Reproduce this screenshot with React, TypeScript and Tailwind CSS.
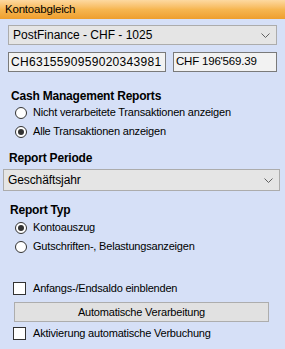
const Chevron = () => (
    <svg width="9" height="5" viewBox="0 0 9 5" className="shrink-0">
        <path d="M0.5 0.5 L4.5 4.5 L8.5 0.5" fill="none" stroke="#606060" strokeWidth="1" />
    </svg>
)

const Radio = ({ checked, label }: { checked?: boolean; label: string }) => (
    <div className="h-[19px] flex items-center pl-[7px] gap-[6px]">
        <div className="w-[12px] h-[12px] rounded-full bg-white border border-[#333] flex items-center justify-center">
            {checked && <div className="w-[6px] h-[6px] rounded-full bg-[#333]" />}
        </div>
        <span className="text-[11px] tracking-[-0.2px] text-black">{label}</span>
    </div>
)

const Check = ({ label }: { label: string }) => (
    <div className="h-[19px] flex items-center pl-[5px] gap-[7px]">
        <div className="w-[13px] h-[13px] bg-white border border-[#333]" />
        <span className="text-[11px] tracking-[-0.2px] text-black">{label}</span>
    </div>
)

export default function App() {
    return (
        <div className="w-[285px] h-[349px] bg-[#d6e0f7] font-['Liberation_Sans',Arial,sans-serif] text-black overflow-hidden">
            {/* Header */}
            <div className="h-[19px] flex items-center px-[5px] bg-gradient-to-b from-[#fdd9a0] via-[#f6b650] to-[#ee9e2c]">
                <span className="text-[11.5px] tracking-[-0.2px]">Kontoabgleich</span>
            </div>

            <div className="px-[8px]">
                <div className="mt-[6px] h-[20px] bg-[#e5e5e5] border border-[#acacac] flex items-center justify-between pl-[4px] pr-[6px]">
                    <span className="text-[12px] tracking-[0px]">PostFinance - CHF - 1025</span>
                    <Chevron />
                </div>

                <div className="mt-[7px] flex gap-[7px]">
                    <div className="w-[158px] h-[20px] bg-[#f2f2f2] border border-[#7a7a7a] flex items-center px-[2px]">
                        <span className="text-[12px] tracking-[0.3px]">CH6315590959020343981</span>
                    </div>
                    <div className="flex-1 h-[20px] bg-[#f2f2f2] border border-[#7a7a7a] flex items-center px-[2px]">
                        <span className="text-[11.5px] tracking-[-0.2px]">CHF 196'569.39</span>
                    </div>
                </div>

                <div className="mt-[17px] h-[14px] flex items-center pl-[3px] font-bold text-[12px] tracking-[-0.2px]">
                    Cash Management Reports
                </div>
                <Radio label="Nicht verarbeitete Transaktionen anzeigen" />
                <Radio checked label="Alle Transaktionen anzeigen" />

                <div className="mt-[10px] h-[14px] flex items-center pl-[1px] font-bold text-[12px] tracking-[-0.2px]">
                    Report Periode
                </div>
                <div className="mt-[4px] ml-[-5px] mr-[-3px] h-[22px] bg-[#e5e5e5] border border-[#acacac] flex items-center justify-between pl-[4px] pr-[6px]">
                    <span className="text-[12px] tracking-[-0.1px]">Geschäftsjahr</span>
                    <Chevron />
                </div>

                <div className="mt-[12px] h-[14px] flex items-center pl-[2px] font-bold text-[12px] tracking-[-0.2px]">
                    Report Typ
                </div>
                <div className="mt-[1px]">
                    <Radio checked label="Kontoauszug" />
                    <Radio label="Gutschriften-, Belastungsanzeigen" />
                </div>

                <div className="mt-[23px]">
                    <Check label="Anfangs-/Endsaldo einblenden" />
                </div>
                <button className="mt-[4px] ml-[6px] w-[255px] h-[20px] bg-[#e1e1e1] border border-[#adadad] flex items-center justify-center text-[11px] tracking-[-0.2px]">
                    Automatische Verarbeitung
                </button>
                <div className="mt-[2px]">
                    <Check label="Aktivierung automatische Verbuchung" />
                </div>
            </div>
        </div>
    )
}
